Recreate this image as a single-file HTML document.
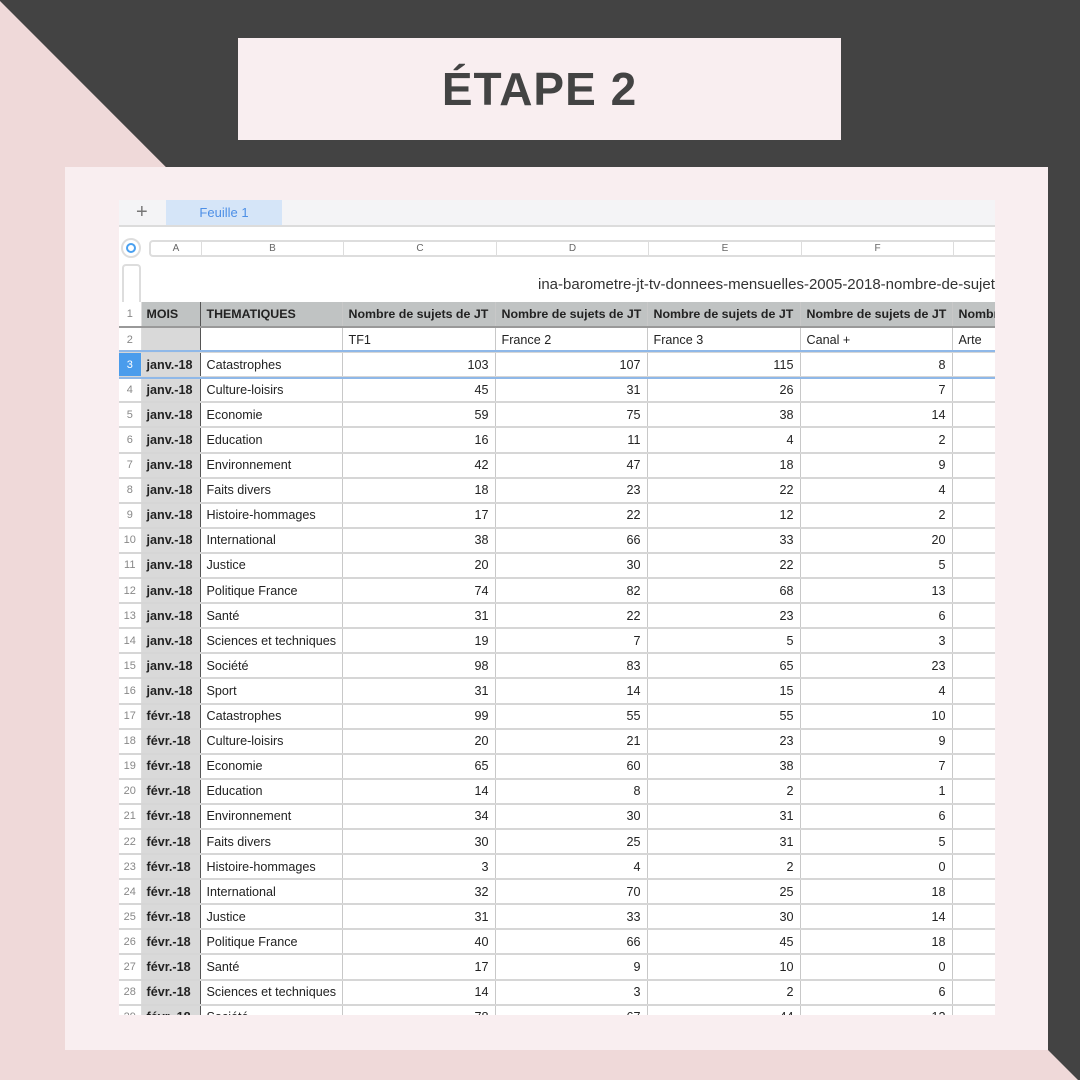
<!DOCTYPE html><html><head><meta charset="utf-8"><style>
*{margin:0;padding:0;box-sizing:border-box}
body{width:1080px;height:1080px;position:relative;overflow:hidden;background:#efd9d9;font-family:"Liberation Sans",Arial,sans-serif}
.abs{position:absolute}
#title{left:238px;top:38px;width:603px;height:102px;background:#f9eef0;display:flex;align-items:center;justify-content:center;font-size:46px;font-weight:bold;color:#434343;letter-spacing:1px}
#panel{left:65px;top:167px;width:983px;height:883px;background:#f9eef0}
#sheet{left:119px;top:200px;width:876px;height:815px;background:#fff;overflow:hidden}
#tabbar{left:0;top:0;width:876px;height:27px;background:#f4f4f6;border-bottom:2px solid #dcdcdc}
#tab{left:47px;top:0;width:116px;height:25px;background:#d5e5f8;color:#4d8fe6;font-size:13px;text-align:center;line-height:25px}
#plus{left:17px;top:0;font-size:20px;line-height:24px;color:#777}
#colhdr{left:30px;top:40px;width:860px;height:17px;border:2px solid #ddd;border-radius:4px;font-size:10px;color:#666}
#colhdr div{position:absolute;top:0;height:13px;line-height:13px;text-align:center;border-right:1px solid #ddd}
#circ{left:2px;top:38px;width:20px;height:20px;border-radius:50%;border:2px solid #ddd;background:#fff}
#circ:after{content:"";position:absolute;left:3px;top:3px;width:10px;height:10px;border-radius:50%;border:2px solid #4aa0f0;box-sizing:border-box}
#corner{left:3px;top:64px;width:19px;height:40px;border:2px solid #ddd;border-radius:4px 4px 0 0;border-bottom:none}
#fname{left:22px;top:76px;width:854px;font-size:15px;color:#333;white-space:nowrap;padding-left:397px;overflow:hidden}
table{position:absolute;left:0;top:102px;width:893px;border-collapse:collapse;table-layout:fixed;font-size:12.6px;color:#222}
tr{height:25.1px}
td{border-bottom:2px solid #d6d6d6;border-right:1px solid #c8c8c8;padding:0 6px;white-space:nowrap;overflow:hidden}
td.n{font-size:11px;color:#888;padding:0 1px;text-align:center;border-right:1px solid #ddd}
td.a{background:#d9d9d9;font-weight:bold;border-right:1px solid #555;padding:0 5px}
td.r{text-align:right}
tr.h td{background:#c0c3c3;font-weight:bold;font-size:12.4px;border-bottom:2px solid #999}
tr.h td.n{background:#fff;font-size:11px;font-weight:normal}
tr.s td.n{background:#4a9cec;color:#fff}
</style></head><body>
<svg class="abs" style="left:0;top:0" width="1080" height="1080"><polygon points="-1,0 1080,0 1080,1082" fill="#434343"/></svg>
<div id="title" class="abs">ÉTAPE 2</div>
<div id="panel" class="abs"></div>
<div id="sheet" class="abs">
<div id="tabbar" class="abs"><div id="plus" class="abs">+</div><div id="tab" class="abs">Feuille 1</div></div>
<div id="circ" class="abs"></div>
<div id="colhdr" class="abs">
<div style="left:0;width:51px">A</div><div style="left:51px;width:142px">B</div><div style="left:193px;width:153px">C</div><div style="left:346px;width:152px">D</div><div style="left:498px;width:153px">E</div><div style="left:651px;width:152px">F</div>
</div>
<div id="corner" class="abs"></div>
<div id="fname" class="abs">ina-barometre-jt-tv-donnees-mensuelles-2005-2018-nombre-de-sujets</div>
<table>
<colgroup><col style="width:22px"><col style="width:59px"><col style="width:142px"><col style="width:153px"><col style="width:152px"><col style="width:153px"><col style="width:152px"><col style="width:60px"></colgroup>
<tr class="h"><td class="n">1</td><td class="a">MOIS</td><td>THEMATIQUES</td><td>Nombre de sujets de JT</td><td>Nombre de sujets de JT</td><td>Nombre de sujets de JT</td><td>Nombre de sujets de JT</td><td>Nombre</td></tr>
<tr><td class="n">2</td><td class="a" style="font-weight:normal"></td><td></td><td>TF1</td><td>France 2</td><td>France 3</td><td>Canal +</td><td>Arte</td></tr>
<tr class="s" style="outline:2px solid #8fb8e8"><td class="n">3</td><td class="a">janv.-18</td><td>Catastrophes</td><td class="r">103</td><td class="r">107</td><td class="r">115</td><td class="r">8</td><td></td></tr>
<tr><td class="n">4</td><td class="a">janv.-18</td><td>Culture-loisirs</td><td class="r">45</td><td class="r">31</td><td class="r">26</td><td class="r">7</td><td></td></tr>
<tr><td class="n">5</td><td class="a">janv.-18</td><td>Economie</td><td class="r">59</td><td class="r">75</td><td class="r">38</td><td class="r">14</td><td></td></tr>
<tr><td class="n">6</td><td class="a">janv.-18</td><td>Education</td><td class="r">16</td><td class="r">11</td><td class="r">4</td><td class="r">2</td><td></td></tr>
<tr><td class="n">7</td><td class="a">janv.-18</td><td>Environnement</td><td class="r">42</td><td class="r">47</td><td class="r">18</td><td class="r">9</td><td></td></tr>
<tr><td class="n">8</td><td class="a">janv.-18</td><td>Faits divers</td><td class="r">18</td><td class="r">23</td><td class="r">22</td><td class="r">4</td><td></td></tr>
<tr><td class="n">9</td><td class="a">janv.-18</td><td>Histoire-hommages</td><td class="r">17</td><td class="r">22</td><td class="r">12</td><td class="r">2</td><td></td></tr>
<tr><td class="n">10</td><td class="a">janv.-18</td><td>International</td><td class="r">38</td><td class="r">66</td><td class="r">33</td><td class="r">20</td><td></td></tr>
<tr><td class="n">11</td><td class="a">janv.-18</td><td>Justice</td><td class="r">20</td><td class="r">30</td><td class="r">22</td><td class="r">5</td><td></td></tr>
<tr><td class="n">12</td><td class="a">janv.-18</td><td>Politique France</td><td class="r">74</td><td class="r">82</td><td class="r">68</td><td class="r">13</td><td></td></tr>
<tr><td class="n">13</td><td class="a">janv.-18</td><td>Santé</td><td class="r">31</td><td class="r">22</td><td class="r">23</td><td class="r">6</td><td></td></tr>
<tr><td class="n">14</td><td class="a">janv.-18</td><td>Sciences et techniques</td><td class="r">19</td><td class="r">7</td><td class="r">5</td><td class="r">3</td><td></td></tr>
<tr><td class="n">15</td><td class="a">janv.-18</td><td>Société</td><td class="r">98</td><td class="r">83</td><td class="r">65</td><td class="r">23</td><td></td></tr>
<tr><td class="n">16</td><td class="a">janv.-18</td><td>Sport</td><td class="r">31</td><td class="r">14</td><td class="r">15</td><td class="r">4</td><td></td></tr>
<tr><td class="n">17</td><td class="a">févr.-18</td><td>Catastrophes</td><td class="r">99</td><td class="r">55</td><td class="r">55</td><td class="r">10</td><td></td></tr>
<tr><td class="n">18</td><td class="a">févr.-18</td><td>Culture-loisirs</td><td class="r">20</td><td class="r">21</td><td class="r">23</td><td class="r">9</td><td></td></tr>
<tr><td class="n">19</td><td class="a">févr.-18</td><td>Economie</td><td class="r">65</td><td class="r">60</td><td class="r">38</td><td class="r">7</td><td></td></tr>
<tr><td class="n">20</td><td class="a">févr.-18</td><td>Education</td><td class="r">14</td><td class="r">8</td><td class="r">2</td><td class="r">1</td><td></td></tr>
<tr><td class="n">21</td><td class="a">févr.-18</td><td>Environnement</td><td class="r">34</td><td class="r">30</td><td class="r">31</td><td class="r">6</td><td></td></tr>
<tr><td class="n">22</td><td class="a">févr.-18</td><td>Faits divers</td><td class="r">30</td><td class="r">25</td><td class="r">31</td><td class="r">5</td><td></td></tr>
<tr><td class="n">23</td><td class="a">févr.-18</td><td>Histoire-hommages</td><td class="r">3</td><td class="r">4</td><td class="r">2</td><td class="r">0</td><td></td></tr>
<tr><td class="n">24</td><td class="a">févr.-18</td><td>International</td><td class="r">32</td><td class="r">70</td><td class="r">25</td><td class="r">18</td><td></td></tr>
<tr><td class="n">25</td><td class="a">févr.-18</td><td>Justice</td><td class="r">31</td><td class="r">33</td><td class="r">30</td><td class="r">14</td><td></td></tr>
<tr><td class="n">26</td><td class="a">févr.-18</td><td>Politique France</td><td class="r">40</td><td class="r">66</td><td class="r">45</td><td class="r">18</td><td></td></tr>
<tr><td class="n">27</td><td class="a">févr.-18</td><td>Santé</td><td class="r">17</td><td class="r">9</td><td class="r">10</td><td class="r">0</td><td></td></tr>
<tr><td class="n">28</td><td class="a">févr.-18</td><td>Sciences et techniques</td><td class="r">14</td><td class="r">3</td><td class="r">2</td><td class="r">6</td><td></td></tr>
<tr><td class="n">29</td><td class="a">févr.-18</td><td>Société</td><td class="r">78</td><td class="r">67</td><td class="r">44</td><td class="r">12</td><td></td></tr>
</table>
</div>
</body></html>
